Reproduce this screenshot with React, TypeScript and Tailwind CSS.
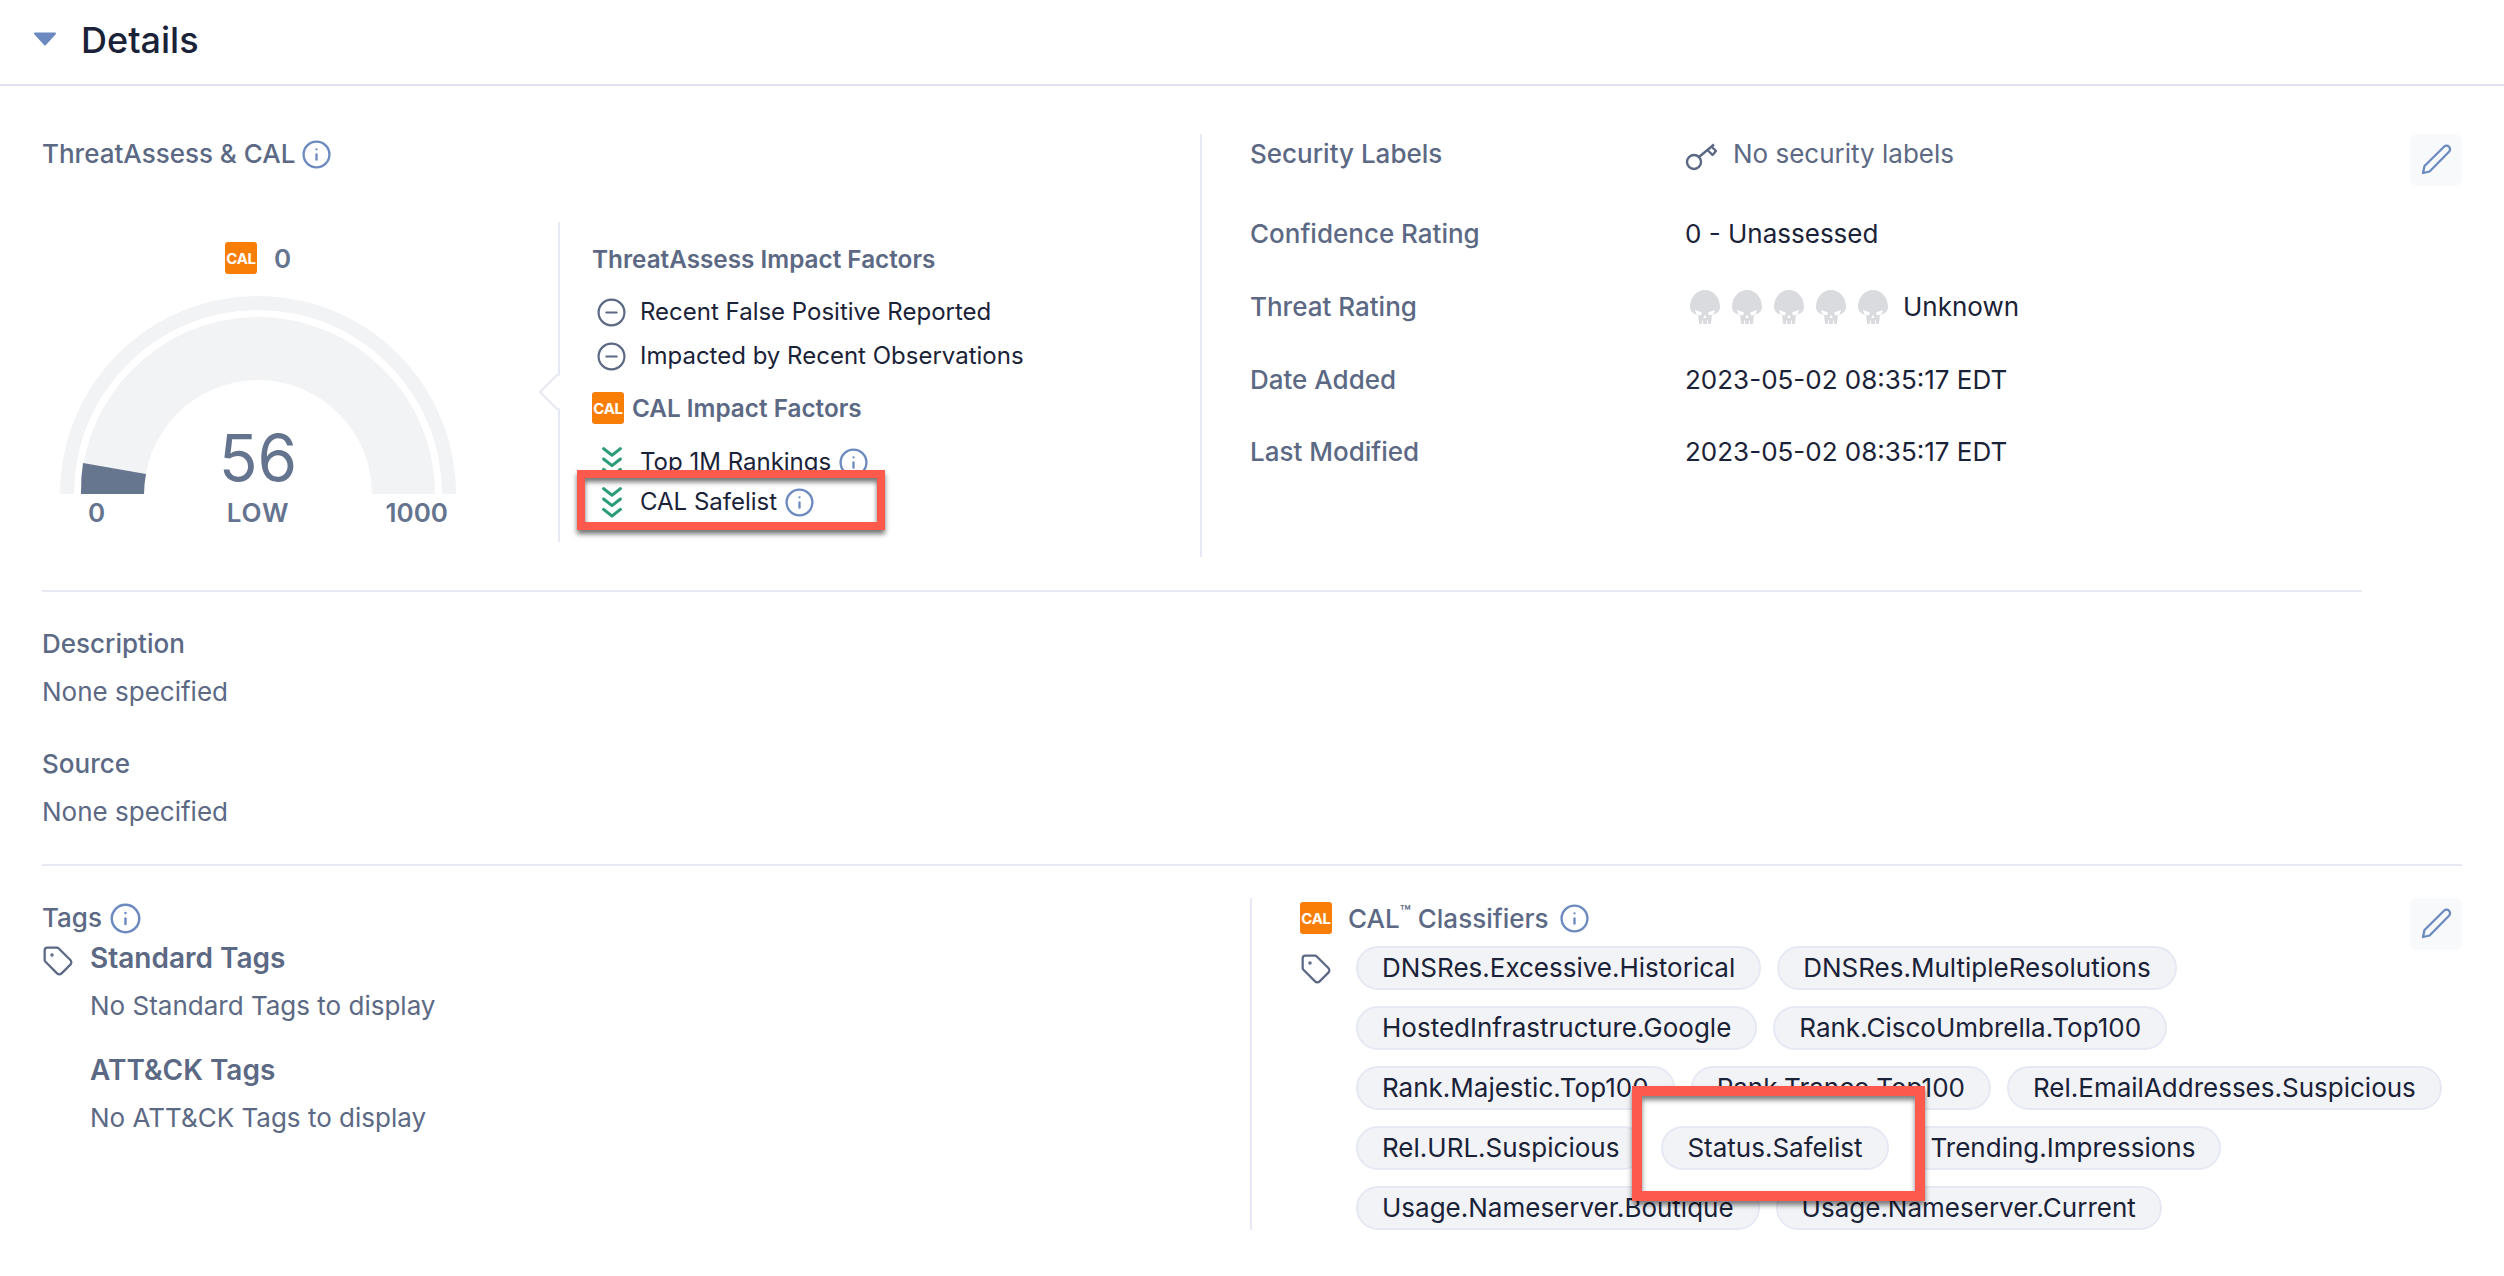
import { CircleMinus, Info, Tag } from "lucide-react";

const pills = [
  "DNSRes.Excessive.Historical",
  "DNSRes.MultipleResolutions",
  "HostedInfrastructure.Google",
  "Rank.CiscoUmbrella.Top100",
  "Rank.Majestic.Top100",
  "Rank.Tranco.Top100",
  "Rel.EmailAddresses.Suspicious",
  "Rel.URL.Suspicious",
  "Status.Safelist",
  "Trending.Impressions",
  "Usage.Nameserver.Boutique",
  "Usage.Nameserver.Current",
];

function CalBadge() {
  return (
    <span className="flex h-[32px] w-[32px] shrink-0 items-center justify-center overflow-hidden rounded-[3px] bg-[#f97e08] text-[15px] font-bold leading-none tracking-[-0.3px] text-white">
      CAL
    </span>
  );
}

function InfoIcon({ size = 31 }: { size?: number }) {
  return <Info size={size} strokeWidth={1.8} className="shrink-0 text-[#6c8abf]" />;
}

function Chevrons() {
  return (
    <svg width="20" height="31" viewBox="0 0 20 31" fill="none" stroke="#2a9d76" strokeWidth="3" strokeLinejoin="round" strokeLinecap="round">
      <path d="M1.6 1.6 10 8.2 18.4 1.6" />
      <path d="M1.6 12 10 18.6 18.4 12" />
      <path d="M1.6 22.4 10 29 18.4 22.4" />
    </svg>
  );
}

function Pencil() {
  return (
    <button className="flex h-[52px] w-[52px] items-center justify-center rounded-[8px] bg-[#f8f9fb]">
      <svg width="32" height="32" viewBox="0 0 32 32" fill="none" stroke="#6c8abf" strokeWidth="2.3" strokeLinejoin="round">
        <path d="M3 29 4.5 22 24 2.8a3.5 3.5 0 0 1 5 5L9.6 27.5Z" />
      </svg>
    </button>
  );
}

function Skull() {
  return (
    <svg width="30" height="34" viewBox="0 0 30 34" className="shrink-0">
      <path
        fill="#d9dbde"
        d="M15 0C24 0 30 8 30 17C30 21 27 24 22 25L21 33Q21 34 20 34L10 34Q9 34 9 33L8 25C3 24 0 21 0 17C0 8 6 0 15 0Z"
      />
      <path fill="#fff" d="M5 20 12 22.5 11 25.5 6.5 24.5ZM25 20 18 22.5 19 25.5 23.5 24.5ZM15 24.5l-1.8 3.5h3.6Z" />
      <path stroke="#fff" strokeWidth="1.2" d="M12.5 30.5v3.5M17.5 30.5v3.5" />
    </svg>
  );
}

function Gauge() {
  return (
    <div className="relative ml-[18px] mt-[22px] h-[198px] w-[396px]">
      <svg width="396" height="198" viewBox="0 0 396 198">
        <path fill="#f2f3f5" d="M0 198A198 198 0 0 1 396 198H382A184 184 0 0 0 14 198Z" />
        <path fill="#f2f3f5" d="M21 198A177 177 0 0 1 375 198H312A114 114 0 0 0 84 198Z" />
        <path fill="#67768f" d="M21 198A177 177 0 0 1 23 167L86 178A114 114 0 0 0 84 198Z" />
      </svg>
      <div className="absolute bottom-[4px] left-0 w-full text-center text-[64px] leading-[64px] text-[#64748f]">56</div>
    </div>
  );
}

export default function App() {
  return (
    <div className="h-[1276px] w-[2504px] overflow-hidden bg-white font-['Inter',sans-serif] text-[26px] text-[#1a2238]">
      <header className="flex h-[86px] items-start gap-[25px] border-b-2 border-[#dfe2ec] pl-[33px] pt-[16px]">
        <svg width="24" height="14" viewBox="0 0 24 14" className="mt-[16px]">
          <path d="M2 1.5H22L12 12.5Z" fill="#6c8abf" stroke="#6c8abf" strokeWidth="2" strokeLinejoin="round" />
        </svg>
        <h1 className="-ml-[1px] text-[36px] font-medium leading-[48px]">Details</h1>
      </header>

      <main className="pl-[42px] pr-[42px]">
        <section className="mt-[48px] flex h-[423px]">
          <div className="w-[1158px]">
            <div className="flex h-[40px] items-center gap-[6px] font-medium leading-[40px] text-[#5c6984]">
              ThreatAssess &amp; CAL <InfoIcon />
            </div>
            <div className="mt-[48px] flex">
              <div className="w-[516px] pt-[20px]">
                <div className="ml-[183px] flex h-[32px] items-center gap-[17px] font-semibold text-[#64748f]">
                  <CalBadge />
                  <span>0</span>
                </div>
                <Gauge />
                <div className="ml-[18px] mt-[3px] grid w-[396px] grid-cols-[1fr_auto_1fr] font-semibold leading-[32px] text-[#64748f]">
                  <span className="justify-self-start pl-[28px]">0</span>
                  <span className="tracking-[0.8px]">LOW</span>
                  <span className="justify-self-end pr-[8px]">1000</span>
                </div>
              </div>

              <div className="relative h-[320px] flex-1 border-l-2 border-[#e6e9f4] pl-[32px] pt-[21px] text-[24px]">
                <span className="absolute left-[-16px] top-[157px] h-[26px] w-[26px] rotate-45 border-b-2 border-l-2 border-[#e6e9f4] bg-white" />
                <h3 className="relative text-[24.3px] font-semibold leading-[32px] text-[#5c6984]">ThreatAssess Impact Factors</h3>
                <div className="mt-[15px] flex h-[44px] items-center gap-[13px] pl-[4px]">
                  <CircleMinus size={31} strokeWidth={1.7} className="text-[#5c6984]" />
                  Recent False Positive Reported
                </div>
                <div className="flex h-[44px] items-center gap-[13px] pl-[4px]">
                  <CircleMinus size={31} strokeWidth={1.7} className="text-[#5c6984]" />
                  Impacted by Recent Observations
                </div>
                <div className="relative mt-[14px] flex h-[32px] items-center gap-[8px] text-[24.3px] font-semibold text-[#5c6984]">
                  <CalBadge />
                  CAL Impact Factors
                </div>
                <div className="mt-[16px] flex h-[44px] items-center gap-[18px] pl-[10px]">
                  <Chevrons />
                  <span className="flex items-center gap-[7px]">
                    Top 1M Rankings <InfoIcon />
                  </span>
                </div>
                <span className="absolute left-[17px] top-[248px] h-[60px] w-[308px] border-[8px] border-[#fd5a4d] bg-white shadow-[0_4px_5px_rgba(0,0,0,0.55),inset_0_4px_5px_rgba(0,0,0,0.55)]" />
                <div className="relative z-10 flex h-[36px] items-center gap-[18px] pl-[10px]">
                  <Chevrons />
                  <span className="flex items-center gap-[7px]">
                    CAL Safelist <InfoIcon />
                  </span>
                </div>
              </div>
            </div>
          </div>

          <div className="flex flex-1 justify-between border-l-2 border-[#e6e9f4] pl-[48px]">
            <div className="leading-[40px]">
              <div className="flex h-[40px]">
                <span className="w-[435px] font-medium text-[#5c6984]">Security Labels</span>
                <span className="flex items-center gap-[16px] text-[#5c6984]">
                  <svg width="32" height="32" viewBox="0 0 32 32" fill="none" stroke="#5c6984" strokeWidth="2.4" className="mt-[6px]">
                    <circle cx="9" cy="21" r="7" />
                    <path d="M14 16 29 3.5M23 9.5 27.5 14 31 10 27 6" strokeLinejoin="round" />
                  </svg>
                  No security labels
                </span>
              </div>
              <div className="mt-[40px] flex h-[40px]">
                <span className="w-[435px] font-medium text-[#5c6984]">Confidence Rating</span>
                <span>0 - Unassessed</span>
              </div>
              <div className="mt-[33px] flex h-[40px]">
                <span className="w-[435px] font-medium text-[#5c6984]">Threat Rating</span>
                <span className="flex items-center gap-[12px] pl-[5px]">
                  <Skull />
                  <Skull />
                  <Skull />
                  <Skull />
                  <Skull />
                  <span className="ml-[3px]">Unknown</span>
                </span>
              </div>
              <div className="mt-[33px] flex h-[40px]">
                <span className="w-[435px] font-medium text-[#5c6984]">Date Added</span>
                <span>2023-05-02 08:35:17 EDT</span>
              </div>
              <div className="mt-[32px] flex h-[40px]">
                <span className="w-[435px] font-medium text-[#5c6984]">Last Modified</span>
                <span>2023-05-02 08:35:17 EDT</span>
              </div>
            </div>
            <Pencil />
          </div>
        </section>

        <div className="mt-[33px] w-[2320px] border-t-2 border-[#e6e9f4]" />

        <section className="leading-[40px] text-[#5c6984]">
          <div className="mt-[32px] font-medium">Description</div>
          <div className="mt-[8px]">None specified</div>
          <div className="mt-[32px] font-medium">Source</div>
          <div className="mt-[8px]">None specified</div>
        </section>

        <div className="mt-[32px] border-t-2 border-[#e6e9f4]" />

        <section className="mt-[32px] flex h-[332px]">
          <div className="w-[1208px] leading-[40px] text-[#5c6984]">
            <div className="flex h-[40px] items-center gap-[7px] font-medium">
              Tags <InfoIcon size={33} />
            </div>
            <div className="flex">
              <div className="w-[48px] pt-[7px]">
                <Tag size={32} strokeWidth={1.7} />
              </div>
              <div>
                <div className="text-[28px] font-semibold">Standard Tags</div>
                <div className="mt-[8px]">No Standard Tags to display</div>
                <div className="mt-[24px] text-[28px] font-semibold">ATT&amp;CK Tags</div>
                <div className="mt-[8px]">No ATT&amp;CK Tags to display</div>
              </div>
            </div>
          </div>

          <div className="flex-1 border-l-2 border-[#e6e9f4] pl-[48px]">
            <div className="flex h-[48px] items-start justify-between">
              <div className="mt-[4px] flex h-[32px] items-center gap-[16px] font-medium text-[#5c6984]">
                <CalBadge />
                <span className="flex items-center gap-[10px]">
                  <span>
                    CAL<sup className="text-[18px]">™</sup> Classifiers
                  </span>
                  <InfoIcon />
                </span>
              </div>
              <Pencil />
            </div>
            <div className="flex">
              <div className="w-[56px] pt-[7px]">
                <Tag size={32} strokeWidth={1.7} className="text-[#5c6984]" />
              </div>
              <div className="relative flex w-[1094px] flex-wrap gap-[16px]">
                {pills.map((p) => (
                  <span
                    key={p}
                    className={
                      p === "Status.Safelist"
                        ? "relative z-10 h-[44px] rounded-full border-2 border-[#e6e9f4] bg-[#f2f3f6] px-[24px] leading-[40px]"
                        : "h-[44px] rounded-full border-2 border-[#e6e9f4] bg-[#f2f3f6] px-[24px] leading-[40px]"
                    }
                  >
                    {p}
                  </span>
                ))}
                <span className="absolute left-[276px] top-[140px] h-[115px] w-[293px] border-[10px] border-[#fd5a4d] bg-white shadow-[0_4px_5px_rgba(0,0,0,0.5),inset_0_4px_5px_rgba(0,0,0,0.5)]" />
              </div>
            </div>
          </div>
        </section>
      </main>
    </div>
  );
}
